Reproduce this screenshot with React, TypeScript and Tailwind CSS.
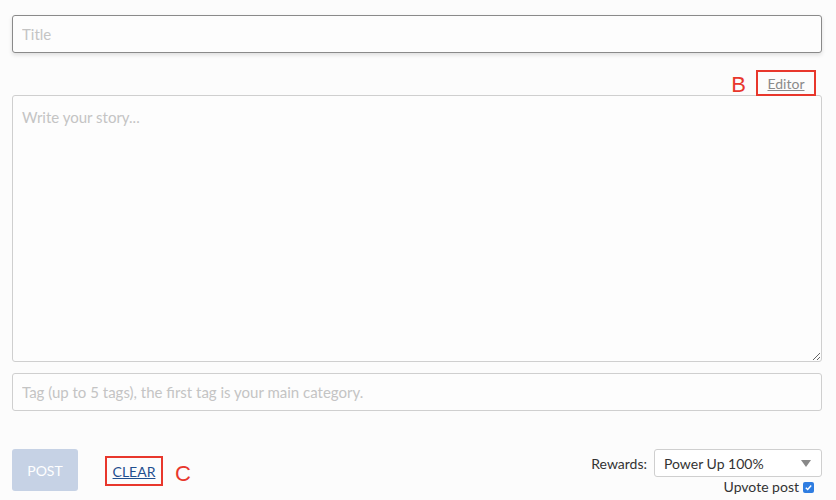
import { useState } from "react"

export default function App() {
  const [title, setTitle] = useState("")
  const [body, setBody] = useState("")
  const [tags, setTags] = useState("")
  const [upvote, setUpvote] = useState(true)

  return (
    <div
      className="w-[836px] h-[500px] bg-[#fcfcfc] pl-3 pr-[14px] pt-[15px] text-[#333]"
      style={{ fontFamily: '"Lato", "Open Sans", sans-serif' }}
    >
      <input
        className="block w-full h-[38px] rounded-[3px] border border-[#8a8a8a] bg-[#fdfdfd] px-[9px] text-[15px] shadow-[0_2px_4px_rgba(0,0,0,0.12)] outline-none placeholder:text-[#c4c4c4]"
        placeholder="Title"
        value={title}
        onChange={(e) => setTitle(e.target.value)}
        autoFocus
      />

      <div className="flex justify-end items-start h-[42px] pt-[17px] pr-[6px]">
        <span className="text-[#e8372c] text-[22px] leading-none mr-[10px] mt-[4px]" style={{ fontFamily: '"Liberation Sans", sans-serif' }}>
          B
        </span>
        <div className="relative z-10 border-2 border-[#e8372c] h-[26px] w-[60px] flex items-center justify-center">
          <a href="#" className="text-[14px] text-[#8a8a8a] underline">
            Editor
          </a>
        </div>
      </div>

      <textarea
        className="block w-full h-[267px] rounded-[3px] border border-[#cfcfcf] bg-[#fdfdfd] px-[9px] py-[10px] text-[15px] outline-none placeholder:text-[#c4c4c4]"
        placeholder="Write your story..."
        value={body}
        onChange={(e) => setBody(e.target.value)}
      />

      <input
        className="mt-[11px] block w-full h-[38px] rounded-[3px] border border-[#cfcfcf] bg-[#fdfdfd] px-[9px] text-[15px] outline-none placeholder:text-[#c4c4c4]"
        placeholder="Tag (up to 5 tags), the first tag is your main category."
        value={tags}
        onChange={(e) => setTags(e.target.value)}
      />

      <div className="mt-[38px] flex items-start">
        <button className="w-[66px] h-[42px] rounded-[3px] bg-[#c6d2e5] text-white text-[14px]">
          POST
        </button>
        <div className="ml-[27px] mt-[7px] border-2 border-[#e8372c] w-[58px] h-[30px] flex items-center justify-center">
          <a href="#" className="text-[14px] text-[#1f4f8f] underline">
            CLEAR
          </a>
        </div>
        <span className="ml-[12px] mt-[8px] text-[#e8372c] text-[22px]" style={{ fontFamily: '"Liberation Sans", sans-serif' }}>
          C
        </span>

        <div className="ml-auto flex flex-col items-end">
          <div className="flex items-center">
            <span className="text-[14px] text-[#333] mr-[7px]">Rewards:</span>
            <div className="relative w-[168px] h-[28px] rounded-[3px] border border-[#cfcfcf] bg-white flex items-center px-[9px] text-[14px]">
              Power Up 100%
              <span className="absolute right-[10px] top-[10px] w-0 h-0 border-l-[5px] border-r-[5px] border-t-[7px] border-l-transparent border-r-transparent border-t-[#888]" />
            </div>
          </div>
          <label className="flex items-center text-[14px] text-[#333] pr-[8px] leading-[20px]">
            Upvote post
            <button
              onClick={() => setUpvote(!upvote)}
              className={`ml-[4px] w-[11px] h-[11px] rounded-[2px] flex items-center justify-center ${upvote ? "bg-[#2f7de1]" : "bg-white border border-[#888]"}`}
            >
              {upvote && (
                <svg viewBox="0 0 10 10" className="w-[9px] h-[9px]">
                  <path d="M2 5.2 L4.1 7.2 L8 2.8" stroke="white" strokeWidth="1.6" fill="none" />
                </svg>
              )}
            </button>
          </label>
        </div>
      </div>
    </div>
  )
}
